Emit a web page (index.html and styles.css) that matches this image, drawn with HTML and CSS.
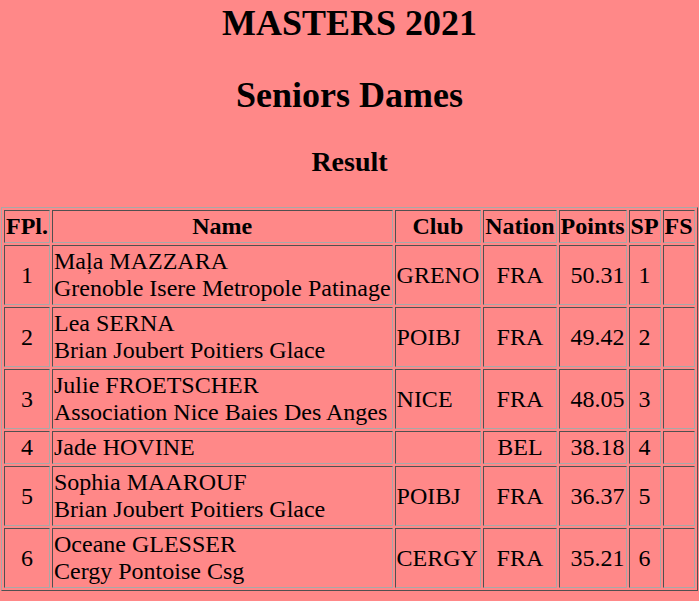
FILE: index.html
```html
<!DOCTYPE html>
<html lang="fr">
<head>
<meta charset="utf-8">
<title>MASTERS 2021 - Seniors Dames</title>
<link rel="stylesheet" href="styles.css">
</head>
<body>
<h2 class="event">MASTERS 2021</h2>
<h2 class="category">Seniors Dames</h2>
<h3 class="segment">Result</h3>
<table class="results">
  <tr>
    <th>FPl.</th>
    <th>Name</th>
    <th>Club</th>
    <th>Nation</th>
    <th>Points</th>
    <th>SP</th>
    <th>FS</th>
  </tr>
  <tr>
    <td class="c">1</td>
    <td class="l">Maļa MAZZARA<br>Grenoble Isere Metropole Patinage</td>
    <td class="l">GRENO</td>
    <td class="c">FRA</td>
    <td class="r">50.31</td>
    <td class="c">1</td>
    <td class="c"></td>
  </tr>
  <tr>
    <td class="c">2</td>
    <td class="l">Lea SERNA<br>Brian Joubert Poitiers Glace</td>
    <td class="l">POIBJ</td>
    <td class="c">FRA</td>
    <td class="r">49.42</td>
    <td class="c">2</td>
    <td class="c"></td>
  </tr>
  <tr>
    <td class="c">3</td>
    <td class="l">Julie FROETSCHER<br>Association Nice Baies Des Anges</td>
    <td class="l">NICE</td>
    <td class="c">FRA</td>
    <td class="r">48.05</td>
    <td class="c">3</td>
    <td class="c"></td>
  </tr>
  <tr>
    <td class="c">4</td>
    <td class="l">Jade HOVINE</td>
    <td class="l"></td>
    <td class="c">BEL</td>
    <td class="r">38.18</td>
    <td class="c">4</td>
    <td class="c"></td>
  </tr>
  <tr>
    <td class="c">5</td>
    <td class="l">Sophia MAAROUF<br>Brian Joubert Poitiers Glace</td>
    <td class="l">POIBJ</td>
    <td class="c">FRA</td>
    <td class="r">36.37</td>
    <td class="c">5</td>
    <td class="c"></td>
  </tr>
  <tr>
    <td class="c">6</td>
    <td class="l">Oceane GLESSER<br>Cergy Pontoise Csg</td>
    <td class="l">CERGY</td>
    <td class="c">FRA</td>
    <td class="r">35.21</td>
    <td class="c">6</td>
    <td class="c"></td>
  </tr>
</table>
</body>
</html>
```
FILE: styles.css
```css
html, body {
  overflow: hidden;
}
body {
  margin: 0;
  background: #ff8888;
  color: #000;
  font-family: "Liberation Serif", "Times New Roman", serif;
  font-size: 24px;
}
h2 {
  font-size: 36px;
  font-weight: bold;
  text-align: center;
  margin: 30px 0 0;
}
h2.event {
  margin-top: 2px;
}
h3.segment {
  font-size: 28px;
  font-weight: bold;
  text-align: center;
  margin: 30px 0 0;
}
table.results {
  margin: 29px 0 0 1px;
  border-collapse: separate;
  border-spacing: 2px;
  border: 1px solid;
  border-color: #a8a8a8 #505050 #505050 #a8a8a8;
}
.results th,
.results td {
  border: 1px solid;
  border-color: #505050 #a8a8a8 #a8a8a8 #505050;
  padding: 2px 1px;
  vertical-align: middle;
  white-space: nowrap;
}
.results th {
  font-weight: bold;
  text-align: center;
}
.results td.c { text-align: center; }
.results td.l { text-align: left; }
.results td.r { text-align: right; }
```
